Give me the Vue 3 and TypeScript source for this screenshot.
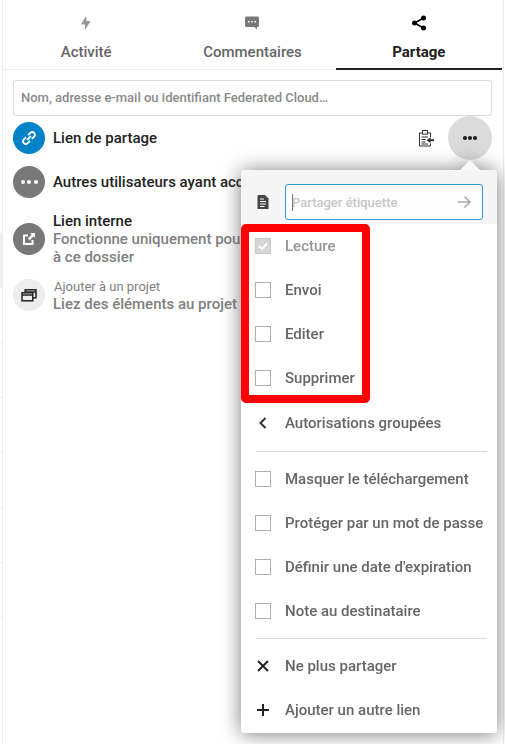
<script setup lang="ts">
const tabs = [
  { label: 'Activité', icon: 'bolt' },
  { label: 'Commentaires', icon: 'comment' },
  { label: 'Partage', icon: 'share', active: true },
]
const perms = [
  { label: 'Lecture', checked: true },
  { label: 'Envoi' },
  { label: 'Editer' },
  { label: 'Supprimer' },
]
const options = [
  'Masquer le téléchargement',
  'Protéger par un mot de passe',
  "Définir une date d'expiration",
  'Note au destinataire',
]
</script>

<template>
  <div class="page">
    <div class="rail">
      <div v-for="n in 11" :key="n" class="rail-row" :class="{ hl: n === 5, lined: n > 5 }"></div>
    </div>
    <main class="sidebar">
      <nav class="tabs">
        <div v-for="t in tabs" :key="t.label" class="tab" :class="{ active: t.active }">
          <svg class="tab-icon" viewBox="0 0 16 16" width="16" height="16">
            <path v-if="t.icon === 'bolt'" d="M8 1 L3 9.5 H7 V15 L12.5 6 H8.5 Z" fill="#969696" />
            <path v-else-if="t.icon === 'comment'" d="M2.5 1.5 H13.5 A1.5 1.5 0 0 1 15 3 V10.5 A1.5 1.5 0 0 1 13.5 12 H13 V14.5 L10.5 12 H2.5 A1.5 1.5 0 0 1 1 10.5 V3 A1.5 1.5 0 0 1 2.5 1.5 Z M4 6 V7.5 H5.5 V6 Z M7.2 6 V7.5 H8.7 V6 Z M10.5 6 V7.5 H12 V6 Z" fill="#787878" fill-rule="evenodd" />
            <g v-else fill="#000">
              <circle cx="12.5" cy="3" r="2.5" />
              <circle cx="3.5" cy="8" r="2.5" />
              <circle cx="12.5" cy="13" r="2.5" />
              <path d="M3.5 8 L12.5 3 M3.5 8 L12.5 13" stroke="#000" stroke-width="1.6" />
            </g>
          </svg>
          <span>{{ t.label }}</span>
        </div>
      </nav>

      <section class="content">
        <div class="search">Nom, adresse e-mail ou identifiant Federated Cloud…</div>

        <div class="row row-link">
          <span class="avatar blue">
            <svg viewBox="0 0 16 16" width="16" height="16" fill="none" stroke="#fff" stroke-width="1.9" stroke-linecap="round">
              <path d="M6.6 9.4 L9.4 6.6" />
              <path d="M7.6 4.6 L9.3 2.9 A2.5 2.5 0 0 1 13.1 6.7 L11.4 8.4" />
              <path d="M8.4 11.4 L6.7 13.1 A2.5 2.5 0 0 1 2.9 9.3 L4.6 7.6" />
            </svg>
          </span>
          <strong class="title grow">Lien de partage</strong>
          <svg class="clip" viewBox="0 0 16 17" width="16" height="17" fill="none" stroke="#333" stroke-width="1">
            <path d="M4.5 3 H1.5 V16 H12.5 V13.5" />
            <path d="M9 3 H12.5 V7.5" />
            <rect x="4.5" y="0.5" width="5" height="3.6" fill="#fff" />
            <path d="M3.5 7 H10 M3.5 9.5 H7.5 M3.5 12 H7.5 M3.5 14 H10" />
            <path d="M16 10.2 H10" stroke-width="2" />
            <path d="M12.5 7.2 L8.5 10.2 L12.5 13.2 Z" fill="#333" stroke="none" />
          </svg>
          <span class="more-btn">
            <i></i><i></i><i></i>
          </span>
        </div>

        <div class="row row-others">
          <span class="avatar grey">
            <span class="dots"><i></i><i></i><i></i></span>
          </span>
          <strong class="title clipped">Autres utilisateurs ayant accès</strong>
        </div>

        <div class="row row-internal">
          <span class="avatar grey">
            <svg viewBox="0 0 16 16" width="16" height="16" fill="#fff">
              <path d="M2 3.5 H7 V5.5 H4 V12 H10.5 V9 H12.5 V14 H2 Z" />
              <path d="M9 2 H14 V7 L12.4 5.4 L8.6 9.2 L6.8 7.4 L10.6 3.6 Z" />
            </svg>
          </span>
          <div class="text clipped">
            <strong class="title">Lien interne</strong>
            <span class="sub">Fonctionne uniquement pour</span>
            <span class="sub">à ce dossier</span>
          </div>
        </div>

        <div class="row row-project">
          <span class="avatar light">
            <svg viewBox="0 0 16 16" width="16" height="16" fill="none" stroke="#222" stroke-width="1.5">
              <rect x="4.2" y="2.8" width="10.8" height="8" />
              <path d="M4.2 5 H15" />
              <rect x="1" y="5.8" width="10.8" height="8" fill="#ededed" />
              <path d="M1 8 H11.8" />
            </svg>
          </span>
          <div class="text clipped nudge">
            <span class="small">Ajouter à un projet</span>
            <span class="sub">Liez des éléments au projet</span>
          </div>
        </div>
      </section>

      <aside class="menu">
        <span class="arrow"></span>
        <div class="menu-head">
          <svg class="head-icon" viewBox="0 0 16 16" width="16" height="16">
            <path d="M3.5 1 H10 L13.5 4.5 V15 H2.5 V2 A1 1 0 0 1 3.5 1 Z" fill="#444" />
            <path d="M5 5 H9 M5 7.5 H11 M5 10 H11 M5 12.5 H9.5" stroke="#fff" stroke-width="1.1" />
          </svg>
          <div class="label-input">
            <span class="caret"></span>
            <span class="placeholder">Partager étiquette</span>
            <svg viewBox="0 0 16 16" width="16" height="16" fill="none" stroke="#969696" stroke-width="1.5">
              <path d="M1.5 8 H14 M8.5 2.5 L14 8 L8.5 13.5" />
            </svg>
          </div>
        </div>

        <ul class="perm-list">
          <li v-for="p in perms" :key="p.label" class="item" :class="{ disabled: p.checked }">
            <span class="icon-cell">
              <span class="box" :class="{ checked: p.checked }">
                <svg v-if="p.checked" viewBox="0 0 14 14" width="14" height="14" fill="none" stroke="#fff" stroke-width="2">
                  <path d="M3 7 L6 10 L11 4.5" />
                </svg>
              </span>
            </span>
            <span>{{ p.label }}</span>
          </li>
          <li class="highlight"></li>
        </ul>

        <ul class="group first">
          <li class="item">
            <span class="icon-cell">
              <svg viewBox="0 0 16 16" width="16" height="16" fill="none" stroke="#333" stroke-width="2">
                <path d="M10.5 3 L5.5 8 L10.5 13" />
              </svg>
            </span>
            <span>Autorisations groupées</span>
          </li>
        </ul>
        <hr class="rule-a" />
        <ul class="group">
          <li v-for="o in options" :key="o" class="item">
            <span class="icon-cell"><span class="box"></span></span>
            <span>{{ o }}</span>
          </li>
        </ul>
        <hr class="rule-b" />
        <ul class="group">
          <li class="item">
            <span class="icon-cell">
              <svg viewBox="0 0 16 16" width="16" height="16" fill="none" stroke="#222" stroke-width="2">
                <path d="M3 3 L13 13 M13 3 L3 13" />
              </svg>
            </span>
            <span>Ne plus partager</span>
          </li>
          <li class="item">
            <span class="icon-cell">
              <svg viewBox="0 0 16 16" width="16" height="16" fill="none" stroke="#222" stroke-width="2">
                <path d="M2 8 H14 M8 2 V14" />
              </svg>
            </span>
            <span>Ajouter un autre lien</span>
          </li>
        </ul>
      </aside>
    </main>
  </div>
</template>

<style>
html, body { margin: 0; background: #fff; overflow: hidden; }
</style>

<style scoped>
* { box-sizing: border-box; }
.page {
  width: 505px;
  height: 744px;
  display: flex;
  overflow: hidden;
  font-family: Roboto, "Liberation Sans", sans-serif;
  font-size: 15px;
  color: #222;
  background: #fff;
}
.rail {
  width: 3px;
  flex: none;
  border-right: 1px solid #ededed;
  display: flex;
  flex-direction: column;
  padding-top: 13px;
}
.rail-row {
  height: 55px;
  flex: none;
}
.rail-row.lined { border-bottom: 1px solid #ededed; }
.rail-row.hl { background: #e6f2fa; }
.sidebar {
  position: relative;
  width: 501px;
  flex: none;
  border-right: 1px solid #ededed;
}
.tabs {
  display: flex;
  height: 70px;
  padding-right: 1px;
  border-bottom: 1px solid #ededed;
}
.tab {
  flex: 1;
  height: 70px;
  padding-top: 15px;
  display: flex;
  flex-direction: column;
  align-items: center;
  gap: 11px;
  color: #666;
  font-weight: 500;
  font-size: 15px;
  line-height: 20px;
}
.tab.active {
  color: #222;
  font-weight: 700;
  border-bottom: 2px solid #222;
}
.tab-icon { flex: none; }
.content {
  padding: 10px 11px 0 10px;
}
.search {
  height: 36px;
  border: 1px solid #dbdbdb;
  border-radius: 3px;
  padding: 0 7px;
  line-height: 34px;
  color: #8a8a8a;
  font-size: 13px;
  font-weight: 500;
  white-space: nowrap;
}
.row {
  display: flex;
  align-items: center;
  gap: 8px;
}
.row-link { height: 44px; }
.row-others { height: 44px; }
.row-internal { height: 70px; }
.row-project { height: 42px; }
.avatar {
  width: 32px;
  height: 32px;
  flex: none;
  border-radius: 50%;
  display: flex;
  align-items: center;
  justify-content: center;
}
.blue { background: #0082c9; }
.grey { background: #787878; }
.light { background: #ededed; }
.title {
  font-weight: 500;
  line-height: 18px;
  white-space: nowrap;
}
.grow { flex: 1; }
.clipped {
  width: 188px;
  overflow: hidden;
}
.nudge { margin-top: 2px; }
.clip { margin-right: 6px; }
.more-btn {
  width: 44px;
  height: 44px;
  border-radius: 50%;
  background: #dbdbdb;
  display: flex;
  align-items: center;
  justify-content: center;
  gap: 1.5px;
  flex: none;
}
.more-btn i {
  width: 3.5px;
  height: 3.5px;
  border-radius: 50%;
  background: #222;
}
.dots { display: flex; gap: 2.5px; }
.dots i {
  width: 4px;
  height: 4px;
  border-radius: 50%;
  background: #fff;
}
.text {
  display: flex;
  flex-direction: column;
  line-height: 18px;
}
.sub {
  color: #808080;
  font-weight: 500;
  line-height: 18px;
  white-space: nowrap;
}
.small {
  color: #808080;
  font-size: 13px;
  line-height: 16px;
  padding-left: 1px;
  white-space: nowrap;
}
.menu {
  position: absolute;
  left: 238px;
  top: 170px;
  width: 256px;
  height: 563px;
  background: #fff;
  border-radius: 3px;
  filter: drop-shadow(0 1px 10px rgba(77, 77, 77, .75));
  color: #666;
  font-weight: 500;
}
.arrow {
  position: absolute;
  top: -10px;
  left: 219px;
  border: 10px solid transparent;
  border-top: 0;
  border-bottom-color: #fafafa;
}
.menu-head {
  height: 54px;
  background: #f5f5f5;
  border-radius: 3px 3px 0 0;
  display: flex;
  align-items: flex-end;
  padding: 0 14px 4px;
  gap: 14px;
}
.head-icon { flex: none; margin-bottom: 10px; }
.label-input {
  position: relative;
  flex: 1;
  height: 36px;
  border: 1px solid #0082c9;
  border-radius: 3px;
  background: #fff;
  display: flex;
  align-items: center;
  justify-content: space-between;
  padding: 0 10px 0 6px;
  opacity: .8;
}
.caret {
  position: absolute;
  left: 6px;
  top: 9px;
  width: 1px;
  height: 17px;
  background: #555;
}
.placeholder { color: #bdbdbd; font-weight: 500; font-size: 13px; }
ul {
  list-style: none;
  margin: 0;
  padding: 0;
}
.perm-list {
  position: relative;
}
.first { margin-top: 1px; }
.item {
  height: 44px;
  display: flex;
  align-items: center;
  white-space: nowrap;
}
.item.disabled { color: #969696; }
.icon-cell {
  width: 44px;
  flex: none;
  display: flex;
  align-items: center;
  justify-content: center;
}
.box {
  width: 16px;
  height: 16px;
  border: 1px solid #b0b0b0;
  display: flex;
  align-items: center;
  justify-content: center;
  background: #fff;
}
.box.checked {
  background: #d6d6d6;
  border-color: #c8c8c8;
}
.highlight {
  position: absolute;
  left: 0;
  top: 0;
  width: 129px;
  height: 179px;
  border: 8px solid #f00;
  border-radius: 5px;
}
hr {
  margin-left: 15px;
  margin-right: 10px;
  border: 0;
  border-top: 1px solid #dbdbdb;
}
.rule-a { margin-top: 6px; margin-bottom: 5px; }
.rule-b { margin-top: 5px; margin-bottom: 5px; }
</style>
